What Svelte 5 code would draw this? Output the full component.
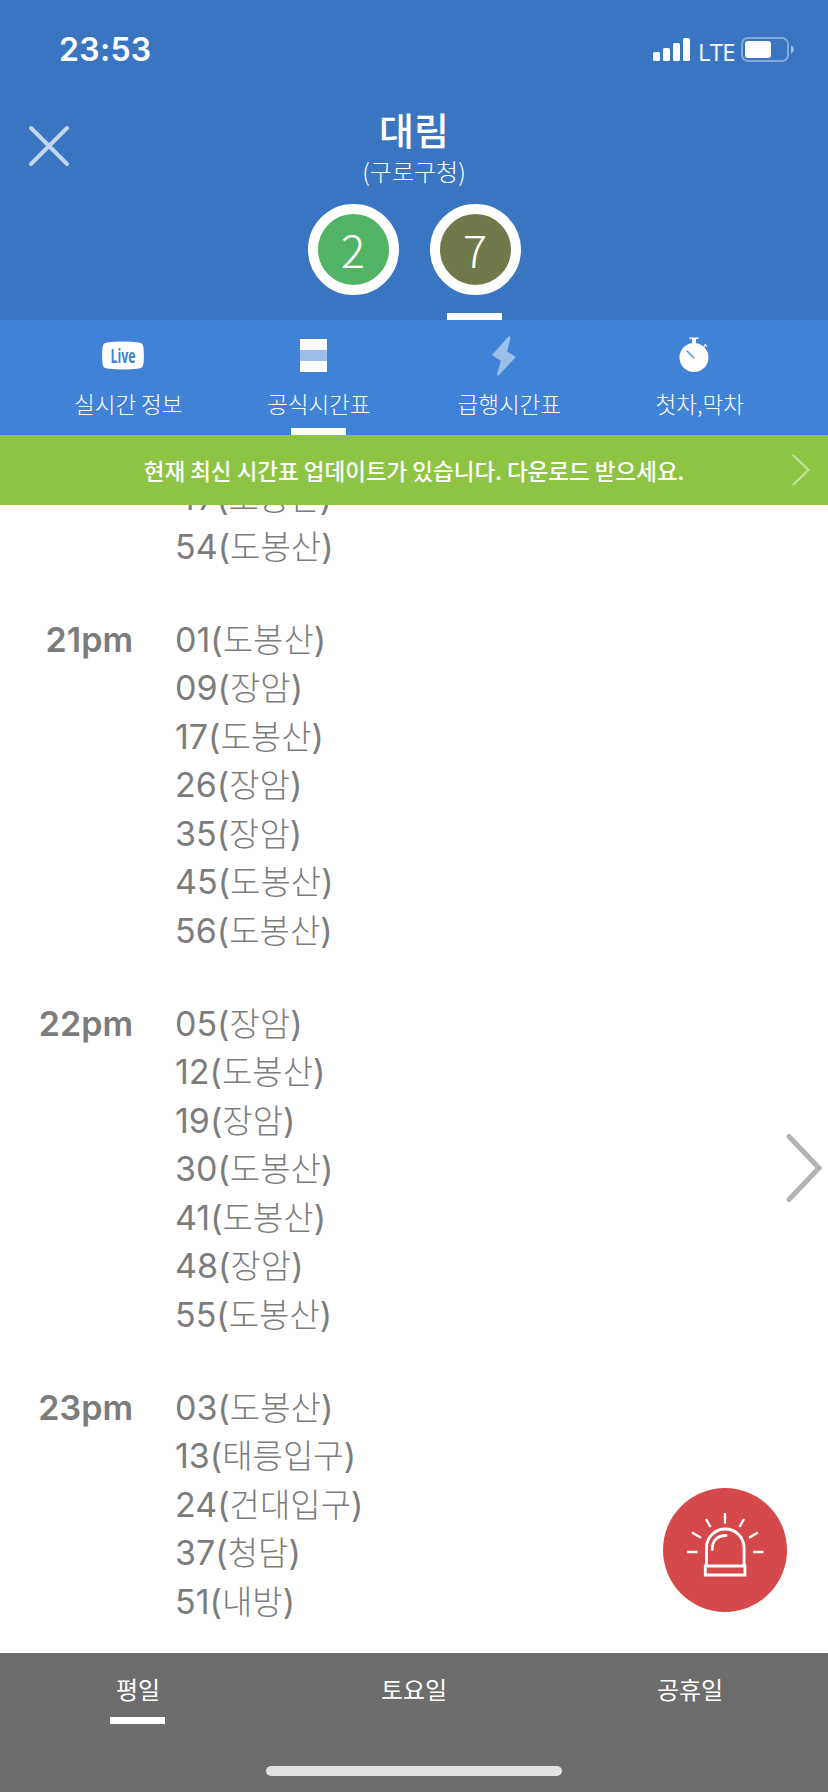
<script>
    let activeLine = "7";
    let activeTab = "official";
    let activeDay = "평일";

    const lines = [
        { name: "2", color: "#53b365" },
        { name: "7", color: "#6f7949" },
    ];

    const tabs = [
        { id: "live", label: "실시간 정보" },
        { id: "official", label: "공식시간표" },
        { id: "express", label: "급행시간표" },
        { id: "firstlast", label: "첫차,막차" },
    ];

    const days = ["평일", "토요일", "공휴일"];

    const timetable = [
        {
            hour: "",
            trains: [
                ["47", "도봉산"],
                ["54", "도봉산"],
            ],
        },
        {
            hour: "21pm",
            trains: [
                ["01", "도봉산"],
                ["09", "장암"],
                ["17", "도봉산"],
                ["26", "장암"],
                ["35", "장암"],
                ["45", "도봉산"],
                ["56", "도봉산"],
            ],
        },
        {
            hour: "22pm",
            trains: [
                ["05", "장암"],
                ["12", "도봉산"],
                ["19", "장암"],
                ["30", "도봉산"],
                ["41", "도봉산"],
                ["48", "장암"],
                ["55", "도봉산"],
            ],
        },
        {
            hour: "23pm",
            trains: [
                ["03", "도봉산"],
                ["13", "태릉입구"],
                ["24", "건대입구"],
                ["37", "청담"],
                ["51", "내방"],
            ],
        },
    ];
</script>

<main>
    <header>
        <div class="status">
            <span class="clock">23:53</span>
            <div class="indicators">
                <svg width="37" height="24" viewBox="0 0 37 24" fill="#fff">
                    <rect x="0" y="14" width="7" height="9" rx="1.6" />
                    <rect x="10" y="10" width="7" height="13" rx="1.6" />
                    <rect x="20" y="5" width="7" height="18" rx="1.6" />
                    <rect x="30" y="0" width="7" height="23" rx="1.6" />
                </svg>
                <span class="network">LTE</span>
                <svg width="53" height="26" viewBox="0 0 53 26">
                    <rect
                        x="1"
                        y="1"
                        width="46"
                        height="23"
                        rx="6"
                        fill="none"
                        stroke="#83a9da"
                        stroke-width="2"
                    />
                    <rect x="4" y="4" width="26" height="17" rx="3" fill="#fff" />
                    <path d="M50 8.5c4 1.5 4 6.500 0 8z" fill="#9bbae1" />
                </svg>
            </div>
        </div>

        <div class="station">
            <button class="close" aria-label="닫기">
                <svg width="42" height="42" viewBox="0 0 42 42">
                    <path
                        d="M3 3l36 36M39 3L3 39"
                        stroke="#c3d6ec"
                        stroke-width="4"
                        stroke-linecap="round"
                    />
                </svg>
            </button>
            <h1>대림</h1>
            <p>(구로구청)</p>
        </div>

        <div class="lines">
            {#each lines as line}
                <button
                    class="line"
                    class:active={line.name === activeLine}
                    on:click={() => (activeLine = line.name)}
                >
                    <span class="badge" style="background: {line.color}">{line.name}</span>
                </button>
            {/each}
        </div>
    </header>

    <nav class="tabs">
        {#each tabs as tab}
            <button
                class:active={tab.id === activeTab}
                on:click={() => (activeTab = tab.id)}
            >
                <span class="icon">
                    {#if tab.id === "live"}
                        <svg width="42" height="40" viewBox="0 0 42 40">
                            <path
                                d="M5 6.600Q21 4.600 37 6.600Q41 7 41.400 11Q42.400 20 41.400 28Q41 32 37 32.600Q21 34.600 5 32.600Q1 32 .6 28Q-.4 20 .6 11Q1 7 5 6.600z"
                                fill="#fff"
                            />
                            <text
                                x="21"
                                y="26.500"
                                text-anchor="middle"
                                textLength="25"
                                lengthAdjust="spacingAndGlyphs"
                            >Live</text>
                        </svg>
                    {:else if tab.id === "official"}
                        <svg width="27" height="40" viewBox="0 0 27 40">
                            <path d="M0 3h27v33H0z" fill="#fff" />
                            <path d="M0 14h27v11H0z" fill="#9bbfe9" />
                        </svg>
                    {:else if tab.id === "express"}
                        <svg width="24" height="40" viewBox="0 0 24 40">
                            <path
                                d="M17 1.500L1.500 19l8.500 5.500L6 38.500L22.500 21L14 16L17.500 1.500z"
                                fill="#9bc0eb"
                                stroke="#9bc0eb"
                                stroke-width="2"
                                stroke-linejoin="round"
                            />
                        </svg>
                    {:else}
                        <svg width="30" height="40" viewBox="0 0 30 40">
                            <circle cx="15" cy="21.500" r="14.500" fill="#fff" />
                            <path d="M10.500 1.500h9v1.500h-2.500v4h-4v-4h-2.500z" fill="#fff" />
                            <path
                                d="M24.500 11l2-2M25.500 8l2.500 2.500"
                                stroke="#d5e4f7"
                                stroke-width="1.600"
                            />
                            <path
                                d="M8 15l7 7"
                                stroke="#5b96df"
                                stroke-width="1.600"
                                stroke-linecap="round"
                            />
                        </svg>
                    {/if}
                </span>
                <span class="label">{tab.label}</span>
            </button>
        {/each}
    </nav>

    <div class="notice">
        <span>현재 최신 시간표 업데이트가 있습니다. 다운로드 받으세요.</span>
        <svg width="18" height="32" viewBox="0 0 18 32">
            <path
                d="M1.500 1.500l15 14.500l-15 14.500"
                fill="none"
                stroke="#c3df9c"
                stroke-width="2.200"
                stroke-linecap="round"
            />
        </svg>
    </div>

    <section class="timetable">
        {#each timetable as row}
            <div class="row">
                <strong>{row.hour}</strong>
                <ul>
                    {#each row.trains as [minute, dest]}
                        <li>{minute}(<span>{dest}</span>)</li>
                    {/each}
                </ul>
            </div>
        {/each}

        <button class="next" aria-label="다음">
            <svg width="36" height="70" viewBox="0 0 36 70">
                <path
                    d="M3 3.500L33 35L3 66.500"
                    fill="none"
                    stroke="#b2b2b2"
                    stroke-width="5"
                    stroke-linecap="round"
                />
            </svg>
        </button>

        <button class="alarm" aria-label="신고">
            <svg width="124" height="124" viewBox="0 0 124 124">
                <g fill="none" stroke="#fff" stroke-width="2.800">
                    <path d="M43.500 78V60a18.800 19 0 0 1 37.600 0V78" />
                    <path d="M42.300 78H81.900V87H42.300z" />
                    <path d="M49.300 61.500C49 52 55 47.500 63 47.500" stroke-linecap="round" />
                    <path
                        d="M62 25v10.500M43 31l4.500 8M81 31l-4.500 8M29 44.500l9 5.200M95 44.500l-9 5.200M24 64h10.500M90 64h10.500"
                        stroke-width="2.300"
                    />
                </g>
            </svg>
        </button>
    </section>

    <footer>
        <div class="days">
            {#each days as day}
                <button
                    class:active={day === activeDay}
                    on:click={() => (activeDay = day)}
                >{day}</button>
            {/each}
        </div>
        <div class="home"></div>
    </footer>
</main>

<style>
    :global(body) {
        margin: 0;
        background: #fff;
    }
    main {
        width: 828px;
        height: 1792px;
        display: flex;
        flex-direction: column;
        overflow: hidden;
        font-family: "Noto Sans CJK KR", sans-serif;
        color: #fff;
    }
    button {
        border: 0;
        padding: 0;
        background: none;
        color: inherit;
        font: inherit;
        cursor: pointer;
    }
    svg {
        display: block;
        flex: none;
    }
    header {
        height: 320px;
        flex: none;
        background: #3a75c1;
    }
    .status {
        height: 100px;
        box-sizing: border-box;
        padding: 0 34px 0 59px;
        display: flex;
        align-items: center;
        justify-content: space-between;
    }
    .clock {
        font: 600 32px/40px "Inter", sans-serif;
        letter-spacing: 0.3px;
    }
    .indicators {
        display: flex;
        align-items: center;
    }
    .network {
        width: 35px;
        margin: 3px 8px 0;
        font: 500 24px/30px "Open Sans", sans-serif;
        letter-spacing: -0.8px;
    }
    .station {
        position: relative;
        height: 104px;
        text-align: center;
    }
    .station h1 {
        margin: 0;
        padding-top: 4px;
        font-size: 38px;
        font-weight: 500;
        line-height: 50px;
    }
    .station p {
        margin: 0;
        font-size: 24px;
        font-weight: 300;
        line-height: 34px;
    }
    .close {
        position: absolute;
        left: 28px;
        top: 25px;
    }
    .lines {
        height: 116px;
        display: flex;
        justify-content: center;
        gap: 31px;
    }
    .line {
        position: relative;
        width: 91px;
    }
    .badge {
        display: block;
        box-sizing: border-box;
        width: 91px;
        height: 91px;
        margin-bottom: 25px;
        border: 10px solid #fff;
        border-radius: 50%;
        font-size: 45px;
        font-weight: 300;
        line-height: 69px;
    }
    /* short bar under whichever item is selected */
    .active::after {
        content: "";
        position: absolute;
        left: 50%;
        bottom: 0;
        width: 55px;
        height: 7px;
        margin-left: -28px;
        background: #fff;
    }
    .tabs {
        height: 115px;
        flex: none;
        box-sizing: border-box;
        padding: 0 33px;
        display: flex;
        background: #4082d6;
    }
    .tabs button {
        position: relative;
        flex: 1;
        display: flex;
        flex-direction: column;
        align-items: center;
    }
    .icon {
        margin: 16px 11px 0 0;
    }
    .icon text {
        font: 700 19px "Open Sans", sans-serif;
        fill: #4082d6;
    }
    .label {
        margin-top: 11px;
        font-size: 22.5px;
        font-weight: 300;
        line-height: 32px;
    }
    .notice {
        height: 70px;
        flex: none;
        box-sizing: border-box;
        padding-right: 18px;
        display: flex;
        align-items: center;
        background: #8dc444;
        font-size: 22.5px;
        font-weight: 500;
    }
    .notice span {
        flex: 1;
        padding-left: 36px;
        text-align: center;
        white-space: nowrap;
    }
    .timetable {
        position: relative;
        height: 1148px;
        flex: none;
        overflow: hidden;
        display: flex;
        flex-direction: column;
        justify-content: flex-end;
        gap: 44.5px;
        box-sizing: border-box;
        padding-bottom: 27px;
        color: #7c7c7c;
        font-family: "Inter", "Noto Sans CJK KR", sans-serif;
        font-size: 34px;
    }
    .row {
        flex: none;
        display: flex;
        line-height: 48.5px;
    }
    .row strong {
        width: 133px;
        margin-right: 42px;
        text-align: right;
        font-weight: 600;
    }
    .row ul {
        margin: 0;
        padding: 0;
        list-style: none;
    }
    .row li {
        height: 48.5px;
        white-space: nowrap;
    }
    .row li span {
        font-weight: 300;
        font-size: 33px;
    }
    .next {
        position: absolute;
        right: 6px;
        top: 628px;
    }
    .alarm {
        position: absolute;
        right: 41px;
        top: 983px;
        border-radius: 50%;
        background: #d6494b;
    }
    footer {
        height: 139px;
        flex: none;
        background: #6d6d6d;
    }
    .days {
        height: 113px;
        display: flex;
        align-items: flex-start;
    }
    .days button {
        position: relative;
        flex: 1;
        height: 71px;
        font-size: 24px;
        line-height: 71px;
    }
    .home {
        width: 296px;
        height: 10px;
        margin: 0 auto;
        border-radius: 5px;
        background: #e2e2e2;
    }
</style>
